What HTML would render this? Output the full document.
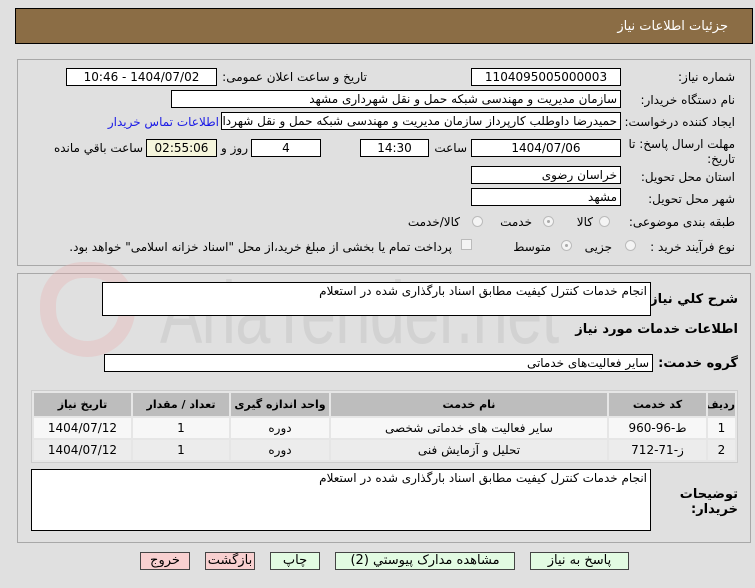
<!DOCTYPE html>
<html><head><meta charset="utf-8"><style>
*{box-sizing:border-box;margin:0;padding:0}
body{width:755px;height:588px;background:#e0e0e0;font-family:"DejaVu Sans","Liberation Sans",sans-serif;font-size:12px;color:#000;position:relative;overflow:hidden}
.a{position:absolute}
.box{position:absolute;background:#fff;border:1px solid #000;direction:rtl;padding:0 3px;line-height:16px;white-space:nowrap;overflow:hidden}
.c{text-align:center}
.l{position:absolute;direction:rtl;white-space:nowrap;text-align:right}
.b{font-weight:bold}
.rad{position:absolute;width:11px;height:11px;border-radius:50%;border:1px solid #bbb;background:#f4f4f4}
.rad.on::after{content:"";position:absolute;left:3px;top:3px;width:3px;height:3px;border-radius:50%;background:#aaa}
table{border-collapse:separate;border-spacing:2px;position:absolute;left:31px;top:390px;width:707px;background:#e6e6e6;border:1px solid #ccc;table-layout:fixed}
td,th{text-align:center;height:20px;font-size:12px;white-space:nowrap;overflow:hidden;padding:0}
th{background:#bdbdbd;height:23px;font-size:11px}
tr.r1 td{background:#f7f7f7}
tr.r2 td{background:#ececec}
.btn{position:absolute;top:552px;height:18px;border:1px solid #444;text-align:center;line-height:16px;font-size:13px;direction:rtl}
</style></head><body>
<div class="a" style="left:15px;top:8px;width:738px;height:36px;background:#8b6d45;border:1px solid #000"></div>
<div class="l" style="right:27px;top:19px;color:#fff;font-size:13px">جزئیات اطلاعات نیاز</div>

<div class="a" style="left:17px;top:59px;width:734px;height:207px;border:1px solid #a8a8a8"></div>
<div class="a" style="left:17px;top:273px;width:734px;height:270px;border:1px solid #a8a8a8"></div>

<div class="a" style="left:160px;top:262px;font-size:88px;font-family:'Liberation Sans Narrow','Liberation Sans',sans-serif;color:#c8c8c8;opacity:.55;letter-spacing:-1px;transform:scaleX(.72);transform-origin:left top">AriaTender.net</div>
<div class="a" style="left:40px;top:262px;width:95px;height:95px;border:16px solid #e8b0b0;border-radius:45% 45% 50% 50%;opacity:.35"></div>

<div class="l" style="right:20px;top:70px">شماره نیاز:</div>
<div class="box c" style="left:471px;top:68px;width:150px;height:18px">1104095005000003</div>
<div class="l" style="right:388px;top:70px">تاریخ و ساعت اعلان عمومی:</div>
<div class="box c" style="left:66px;top:68px;width:151px;height:18px">1404/07/02 - 10:46</div>

<div class="l" style="right:20px;top:93px">نام دستگاه خریدار:</div>
<div class="box" style="left:171px;top:90px;width:450px;height:18px">سازمان مدیریت و مهندسی شبکه حمل و نقل شهرداری مشهد</div>

<div class="l" style="right:20px;top:115px">ایجاد کننده درخواست:</div>
<div class="box" style="left:221px;top:112px;width:400px;height:18px">حمیدرضا داوطلب کارپرداز سازمان مدیریت و مهندسی شبکه حمل و نقل شهرداری</div>
<div class="l" style="right:536px;top:115px;color:#1a1ae6">اطلاعات تماس خریدار</div>

<div class="l" style="right:20px;top:137px;line-height:15px">مهلت ارسال پاسخ: تا<br>تاریخ:</div>
<div class="box c" style="left:471px;top:139px;width:150px;height:18px">1404/07/06</div>
<div class="l" style="right:288px;top:141px">ساعت</div>
<div class="box c" style="left:360px;top:139px;width:69px;height:18px">14:30</div>
<div class="box c" style="left:251px;top:139px;width:70px;height:18px">4</div>
<div class="l" style="right:507px;top:141px">روز و</div>
<div class="box c" style="left:146px;top:139px;width:71px;height:18px;background:#f5f5dc">02:55:06</div>
<div class="l" style="right:612px;top:141px">ساعت باقي مانده</div>

<div class="l" style="right:20px;top:170px">استان محل تحویل:</div>
<div class="box" style="left:471px;top:166px;width:150px;height:18px">خراسان رضوی</div>
<div class="l" style="right:20px;top:192px">شهر محل تحویل:</div>
<div class="box" style="left:471px;top:188px;width:150px;height:18px">مشهد</div>

<div class="l" style="right:20px;top:215px">طبقه بندی موضوعی:</div>
<div class="rad" style="left:599px;top:216px"></div><div class="l" style="right:162px;top:215px">کالا</div>
<div class="rad on" style="left:543px;top:216px"></div><div class="l" style="right:223px;top:215px">خدمت</div>
<div class="rad" style="left:472px;top:216px"></div><div class="l" style="right:295px;top:215px">کالا/خدمت</div>

<div class="l" style="right:20px;top:240px">نوع فرآیند خرید :</div>
<div class="rad" style="left:625px;top:240px"></div><div class="l" style="right:143px;top:240px">جزیی</div>
<div class="rad on" style="left:561px;top:240px"></div><div class="l" style="right:204px;top:240px">متوسط</div>
<div class="a" style="left:461px;top:239px;width:11px;height:11px;border:1px solid #bbb;background:#f4f4f4"></div>
<div class="l" style="right:303px;top:240px">پرداخت تمام یا بخشی از مبلغ خرید،از محل "اسناد خزانه اسلامی" خواهد بود.</div>

<div class="l b" style="right:17px;top:292px;font-size:13px">شرح کلي نیاز:</div>
<div class="box" style="left:102px;top:282px;width:549px;height:34px">انجام خدمات کنترل کیفیت مطابق اسناد بارگذاری شده در استعلام</div>
<div class="l b" style="right:17px;top:322px;font-size:13px">اطلاعات خدمات مورد نیاز</div>
<div class="l b" style="right:17px;top:356px;font-size:13px">گروه خدمت:</div>
<div class="box" style="left:104px;top:354px;width:549px;height:18px">سایر فعالیت‌های خدماتی</div>

<table dir="rtl">
<colgroup><col style="width:27px"><col style="width:97px"><col><col style="width:98px"><col style="width:96px"><col style="width:97px"></colgroup>
<tr><th>ردیف</th><th>کد خدمت</th><th>نام خدمت</th><th>واحد اندازه گیری</th><th>تعداد / مقدار</th><th>تاریخ نیاز</th></tr>
<tr class="r1"><td>1</td><td>ط-96-960</td><td>سایر فعالیت های خدماتی شخصی</td><td>دوره</td><td>1</td><td>1404/07/12</td></tr>
<tr class="r2"><td>2</td><td>ز-71-712</td><td>تحلیل و آزمایش فنی</td><td>دوره</td><td>1</td><td>1404/07/12</td></tr>
</table>

<div class="box" style="left:31px;top:469px;width:620px;height:62px">انجام خدمات کنترل کیفیت مطابق اسناد بارگذاری شده در استعلام</div>
<div class="l b" style="right:17px;top:487px;font-size:13px;line-height:15px">توضیحات<br>خریدار:</div>

<div class="btn" style="left:140px;width:50px;background:#f8d0d0">خروج</div>
<div class="btn" style="left:205px;width:50px;background:#f8d0d0">بازگشت</div>
<div class="btn" style="left:270px;width:50px;background:#e2fbe2">چاپ</div>
<div class="btn" style="left:335px;width:180px;background:#e2fbe2">مشاهده مدارک پیوستي (2)</div>
<div class="btn" style="left:530px;width:99px;background:#e2fbe2">پاسخ به نیاز</div>
</body></html>
